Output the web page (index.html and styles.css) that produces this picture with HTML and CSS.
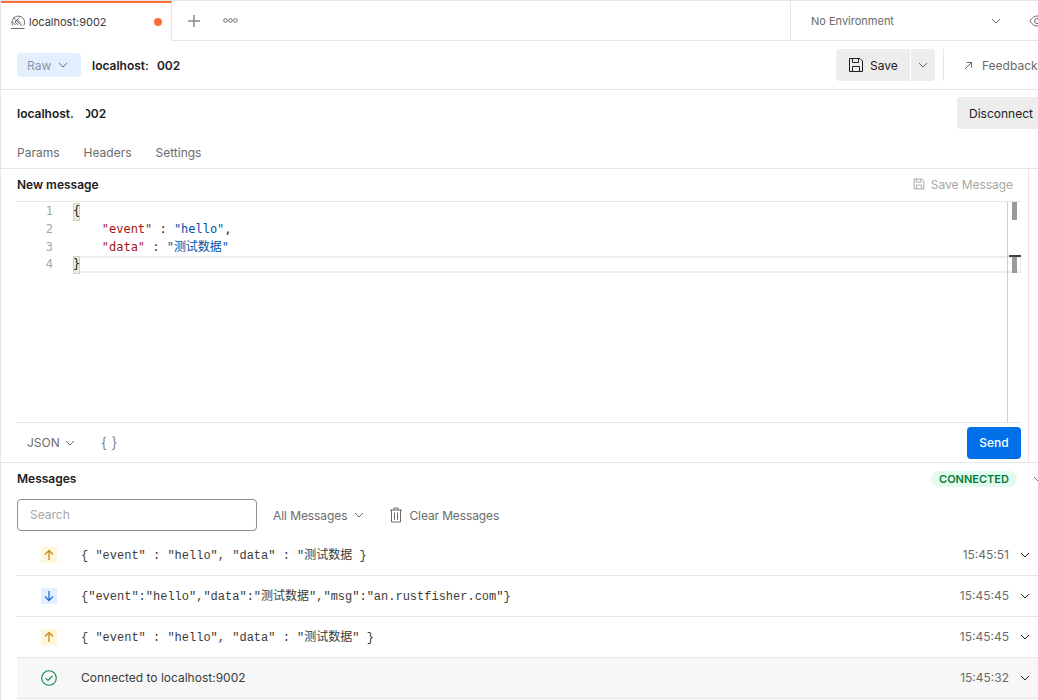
FILE: index.html
```html
<!DOCTYPE html>
<html lang="en">
<head>
<meta charset="utf-8">
<title>localhost:9002</title>
<link rel="stylesheet" href="styles.css">
</head>
<body>
<div class="app">
  <header class="tabbar">
    <div class="tab">
      <svg class="tab-icon" width="16" height="16" viewBox="0 0 16 16" fill="none" stroke="#6b6b6b" stroke-width="1"><path d="M2.800 11.500A6.300 6.300 0 1 1 13.800 11.500M1 14.500H14.500M3 3.500L12 12M9.500 3.500L5 8L8 11M7 5.500L11 9.500M2 7.500L5.500 11"/></svg>
      <span class="tab-name">localhost:9002</span>
      <span class="dot"></span>
    </div>
    <div class="tab-actions">
      <svg width="14" height="14" viewBox="0 0 14 14" stroke="#868686" stroke-width="1.400"><path d="M7 1V13M1 7H13"/></svg>
      <svg class="more" width="15" height="5" viewBox="0 0 15 5" fill="none" stroke="#6b6b6b"><circle cx="2.500" cy="2.500" r="1.800"/><circle cx="7.500" cy="2.500" r="1.800"/><circle cx="12.500" cy="2.500" r="1.800"/></svg>
    </div>
    <div class="env">
      <span class="env-name">No Environment</span>
      <svg class="chev env-chev" width="10" height="6" viewBox="0 0 10 6"><path d="M1 1L5 5L9 1"/></svg>
      <svg class="eye" width="16" height="12" viewBox="0 0 16 12" fill="none" stroke="#6b6b6b"><path d="M1 6C3 2.500 5.500 1 8 1S13 2.500 15 6C13 9.500 10.500 11 8 11S3 9.500 1 6Z"/><circle cx="8" cy="6" r="2.500"/></svg>
    </div>
  </header>

  <section class="titlebar">
    <button class="raw">Raw<svg class="chev raw-chev" width="10" height="6" viewBox="0 0 10 6"><path d="M1 1L5 5L9 1"/></svg></button>
    <div class="req-title"><span>localhost:</span><span class="tail">002</span></div>
    <div class="title-actions">
      <button class="save">
        <svg width="16" height="16" viewBox="0 0 16 16" fill="none" stroke="#212121"><path d="M1.500 1.500H12L14.500 4V14.500H1.500ZM4.500 1.500V5.500H10.500V1.500M4.500 14.500V9.500H11.500V14.500"/></svg>
        Save
      </button>
      <button class="save-more"><svg class="chev" width="10" height="6" viewBox="0 0 10 6"><path d="M1 1L5 5L9 1"/></svg></button>
      <span class="divider"></span>
      <span class="feedback">
        <svg width="9" height="9" viewBox="0 0 9 9" fill="none" stroke="#6b6b6b"><path d="M1 8L7.500 1.500M2.500 1.500H7.500V6.500"/></svg>
        Feedback
      </span>
    </div>
  </section>

  <section class="connect">
    <div class="url"><span>localhost.</span><span class="url-tail">002</span></div>
    <button class="disconnect">Disconnect</button>
  </section>

  <nav class="subtabs">
    <span>Params</span><span>Headers</span><span>Settings</span>
  </nav>

  <section class="composer">
    <div class="composer-head">
      <strong>New message</strong>
      <span class="save-msg">
        <svg width="12" height="12" viewBox="0 0 16 16" fill="none" stroke="#a6a6a6" stroke-width="1.300"><path d="M1.500 1.500H12L14.500 4V14.500H1.500ZM4.500 1.500V5.500H10.500V1.500M4.500 14.500V9.500H11.500V14.500"/></svg>
        Save Message
      </span>
    </div>
    <div class="editor">
      <div class="gutter"><span>1</span><span>2</span><span>3</span><span>4</span></div>
      <div class="code">
        <div class="line"><span class="match">{</span></div>
        <div class="line">    <span class="key">"event"</span> : <span class="str">"hello"</span>,</div>
        <div class="line">    <span class="key">"data"</span> : <span class="str">"测试数据"</span></div>
        <div class="line current"><span class="match">}</span></div>
      </div>
      <div class="scroll">
        <span class="thumb"></span>
        <span class="line-band"></span>
        <span class="cursor-mark"></span>
        <span class="thumb2"></span>
      </div>
    </div>
    <div class="editor-foot">
      <span class="lang">JSON<svg class="chev" width="10" height="6" viewBox="0 0 10 6"><path d="M1 1L5 5L9 1"/></svg></span>
      <span class="braces">{ }</span>
      <button class="send">Send</button>
    </div>
  </section>

  <section class="messages">
    <div class="messages-head">
      <strong>Messages</strong>
      <span class="pill">CONNECTED</span>
      <svg class="chev pill-chev" width="10" height="6" viewBox="0 0 10 6"><path d="M1 1L5 5L9 1"/></svg>
    </div>
    <div class="filters">
      <div class="search">Search</div>
      <span class="filter">All Messages<svg class="chev" width="10" height="6" viewBox="0 0 10 6"><path d="M1 1L5 5L9 1"/></svg></span>
      <span class="clear">
        <svg width="14" height="16" viewBox="0 0 14 16" fill="none" stroke="#6b6b6b"><path d="M1 3H13M5 3V1H9V3M2.500 3V15H11.500V3M5.500 5.500V13M8.500 5.500V13"/></svg>
        Clear Messages
      </span>
    </div>
    <ul class="log">
      <li class="row">
        <span class="badge up"><svg width="12" height="12" viewBox="0 0 12 12" fill="none" stroke="#c58a1c" stroke-width="1.300"><path d="M6 11V1.500M2 5.500L6 1.500L10 5.500"/></svg></span>
        <span class="msg">{ "event" : "hello", "data" : "测试数据 }</span>
        <span class="time">15:45:51</span>
        <svg class="chev dark" width="10" height="6" viewBox="0 0 10 6"><path d="M1 1L5 5L9 1"/></svg>
      </li>
      <li class="row">
        <span class="badge down"><svg width="12" height="12" viewBox="0 0 12 12" fill="none" stroke="#1e6fd9" stroke-width="1.300"><path d="M6 1V10.500M2 6.500L6 10.500L10 6.500"/></svg></span>
        <span class="msg">{"event":"hello","data":"测试数据","msg":"an.rustfisher.com"}</span>
        <span class="time">15:45:45</span>
        <svg class="chev dark" width="10" height="6" viewBox="0 0 10 6"><path d="M1 1L5 5L9 1"/></svg>
      </li>
      <li class="row">
        <span class="badge up"><svg width="12" height="12" viewBox="0 0 12 12" fill="none" stroke="#c58a1c" stroke-width="1.300"><path d="M6 11V1.500M2 5.500L6 1.500L10 5.500"/></svg></span>
        <span class="msg">{ "event" : "hello", "data" : "测试数据" }</span>
        <span class="time">15:45:45</span>
        <svg class="chev dark" width="10" height="6" viewBox="0 0 10 6"><path d="M1 1L5 5L9 1"/></svg>
      </li>
      <li class="row status">
        <span class="badge ok"><svg width="16" height="16" viewBox="0 0 16 16" fill="none" stroke="#0a8a4a" stroke-width="1.100"><circle cx="8" cy="8" r="7.300"/><path d="M4.500 8.200L7 10.500L11.500 5.800"/></svg></span>
        <span class="msg plain">Connected to localhost:9002</span>
        <span class="time">15:45:32</span>
        <svg class="chev dark" width="10" height="6" viewBox="0 0 10 6"><path d="M1 1L5 5L9 1"/></svg>
      </li>
    </ul>
  </section>
</div>
</body>
</html>
```

FILE: styles.css
```css
* { box-sizing: border-box; }
html, body { margin: 0; padding: 0; background: #fff; overflow: hidden; }
body { width: 1038px; height: 700px; font-family: Inter, "Noto Sans CJK SC", sans-serif; font-size: 12px; color: #212121; }
button { font: inherit; border: 0; margin: 0; padding: 0; color: inherit; }
ul { list-style: none; margin: 0; padding: 0; }
strong { font-weight: 600; }
.app { width: 1038px; height: 700px; border-left: 1px solid #e6e6e6; border-top: 1px solid #e6e6e6; overflow: hidden; display: flex; flex-direction: column; }
.chev { fill: none; stroke: #6b6b6b; stroke-width: 1; flex: none; }
.chev.dark { stroke: #212121; }

.tabbar { height: 40px; display: flex; flex: none; }
.tab { width: 171px; flex: none; border-top: 2px solid #ff6c37; border-right: 1px solid #e6e6e6; display: flex; align-items: center; padding: 0 9px 1px 9px; gap: 3px; }
.tab-icon { flex: none; }
.tab-name { flex: 1; color: #3b3b3b; font-size: 11px; }
.dot { width: 8px; height: 8px; border-radius: 50%; background: #ff6c37; }
.tab-actions { width: 618px; flex: none; border-bottom: 1px solid #e6e6e6; display: flex; align-items: center; padding-left: 15px; gap: 22px; }
.env { flex: 1; min-width: 0; border-left: 1px solid #e6e6e6; border-bottom: 1px solid #e6e6e6; display: flex; align-items: center; padding-left: 20px; color: #6b6b6b; font-size: 11px; white-space: nowrap; }
.env-name { width: 180px; flex: none; }
.env-chev { flex: none; }
.eye { flex: none; margin-left: 28px; }

.titlebar { height: 49px; flex: none; border-bottom: 1px solid #e6e6e6; display: flex; align-items: center; padding: 0 0 0 16px; }
.raw { width: 64px; height: 24px; background: #e3eeff; border-radius: 4px; color: #8a95a5; display: flex; align-items: center; padding-left: 10px; gap: 7px; }
.req-title { display: flex; width: 100px; margin-left: 11px; margin-right: 644px; font-weight: 600; color: #212121; white-space: nowrap; }
.tail { margin-left: 8px; }
.title-actions { display: flex; align-items: center; white-space: nowrap; flex: none; }
.save { width: 74px; height: 32px; background: #ededed; border-radius: 4px 0 0 4px; display: flex; align-items: center; gap: 6px; padding-left: 12px; }
.save-more { width: 24px; height: 32px; background: #ededed; border-radius: 0 4px 4px 0; margin-left: 1px; display: flex; align-items: center; justify-content: center; }
.divider { width: 1px; height: 32px; background: #e6e6e6; margin-left: 8px; }
.feedback { color: #6b6b6b; margin-left: 20px; display: flex; align-items: center; gap: 9px; }

.connect { height: 46px; flex: none; display: flex; align-items: center; padding: 0 0 0 16px; justify-content: space-between; }
.url { font-weight: 600; display: flex; white-space: nowrap; }
.url-tail { margin-left: 9px; position: relative; }
.url-tail::before { content: ""; position: absolute; left: -1px; top: 0; width: 4px; height: 100%; background: #fff; }
.disconnect { width: 90px; height: 32px; flex: none; background: #ededed; border-radius: 4px 0 0 4px; text-align: left; padding-left: 12px; margin-right: -9px; }

.subtabs { height: 33px; flex: none; display: flex; gap: 24px; padding: 2px 0 1px 16px; align-items: center; color: #6b6b6b; border-bottom: 1px solid #e6e6e6; }

.composer { flex: none; height: 293px; margin-right: 9px; border-right: 1px solid #e6e6e6; display: flex; flex-direction: column; padding-left: 16px; }
.composer-head { height: 32px; flex: none; display: flex; align-items: center; justify-content: space-between; padding: 0 15px 2px 0; }
.save-msg { color: #a6a6a6; display: flex; align-items: center; gap: 6px; letter-spacing: -0.05px; }
.editor { height: 222px; flex: none; margin-right: 7px; border-top: 1px solid #e6e6e6; border-bottom: 1px solid #e6e6e6; display: flex; position: relative; font-family: "DejaVu Sans Mono", "Noto Sans CJK SC", monospace; font-size: 12px; }
.gutter { width: 56px; flex: none; padding-top: 1px; display: flex; flex-direction: column; color: #a6a6a6; text-align: right; }
.gutter span { height: 17.800px; line-height: 17.800px; padding-right: 20px; }
.code { flex: 1; padding-top: 1px; color: #212121; letter-spacing: -0.02px; }
.line { height: 17.800px; line-height: 17.800px; white-space: pre; }
.line.current { box-shadow: inset 0 2px 0 #ededed, inset 0 -2px 0 #ededed; height: 17px; }
.key { color: #a31515; }
.str { color: #0451a5; }
.match { display: inline-block; background: #e7efe1; box-shadow: inset 0 0 0 1px #c9d4c2; }
.scroll { width: 14px; flex: none; border-left: 1px solid #d0d0d0; position: relative; margin-bottom: -1px; }
.thumb { position: absolute; left: 4px; top: 0; width: 5px; height: 18px; background: #9b9b9b; }
.line-band { position: absolute; left: 0; top: 54px; width: 13px; height: 17px; border-top: 2px solid #ededed; border-bottom: 2px solid #ededed; border-right: 1px solid #ededed; }
.cursor-mark { position: absolute; left: 1px; top: 53px; width: 12px; height: 2px; background: #444; }
.thumb2 { position: absolute; left: 4px; top: 55px; width: 5px; height: 16px; background: #9b9b9b; }

.editor-foot { height: 39px; flex: none; margin-right: 7px; display: flex; align-items: center; padding-left: 10px; }
.lang { color: #6b6b6b; display: flex; align-items: center; gap: 5px; }
.braces { margin-left: 26px; font-size: 15px; font-weight: 300; color: #6b6b6b; }
.send { margin-left: auto; width: 54px; height: 32px; background: #0070e8; color: #fff; border-radius: 4px; font-weight: 500; }

.messages { flex: 1; border-top: 1px solid #e6e6e6; padding-left: 16px; min-height: 0; }
.messages-head { height: 32px; display: flex; align-items: center; white-space: nowrap; padding-bottom: 1px; }
.pill { margin-left: auto; width: 86px; height: 16px; line-height: 16px; border-radius: 8px; background: #e3fbee; color: #067a3a; font-size: 11px; font-weight: 600; text-align: center; }
.pill-chev { margin-left: 16px; margin-right: -5px; }
.filters { height: 36px; padding-top: 4px; display: flex; align-items: center; color: #6b6b6b; }
.search { width: 240px; height: 32px; border: 1px solid #8f8f8f; border-radius: 4px; color: #a6a6a6; line-height: 30px; padding-left: 12px; }
.filter { margin-left: 16px; display: flex; align-items: center; gap: 7px; letter-spacing: -0.08px; }
.clear { margin-left: 25px; display: flex; align-items: center; gap: 6px; letter-spacing: -0.12px; }

.log { margin-top: 4px; }
.row { height: 41px; display: flex; align-items: center; border-bottom: 1px solid #e6e6e6; padding-left: 24px; padding-right: 8px; }
.row.status { background: #f7f7f7; }
.badge { width: 16px; height: 16px; flex: none; display: flex; align-items: center; justify-content: center; }
.badge.up { background: #fff5d9; }
.badge.down { background: #e3eeff; }
.msg { margin-left: 24px; flex: 1; padding-bottom: 2px; font-family: "Liberation Mono", "Noto Sans CJK SC", monospace; color: #3b3b3b; white-space: pre; }
.msg.plain { font-family: Inter, sans-serif; }
.time { color: #6b6b6b; margin-right: 11px; padding-bottom: 2px; }
```
